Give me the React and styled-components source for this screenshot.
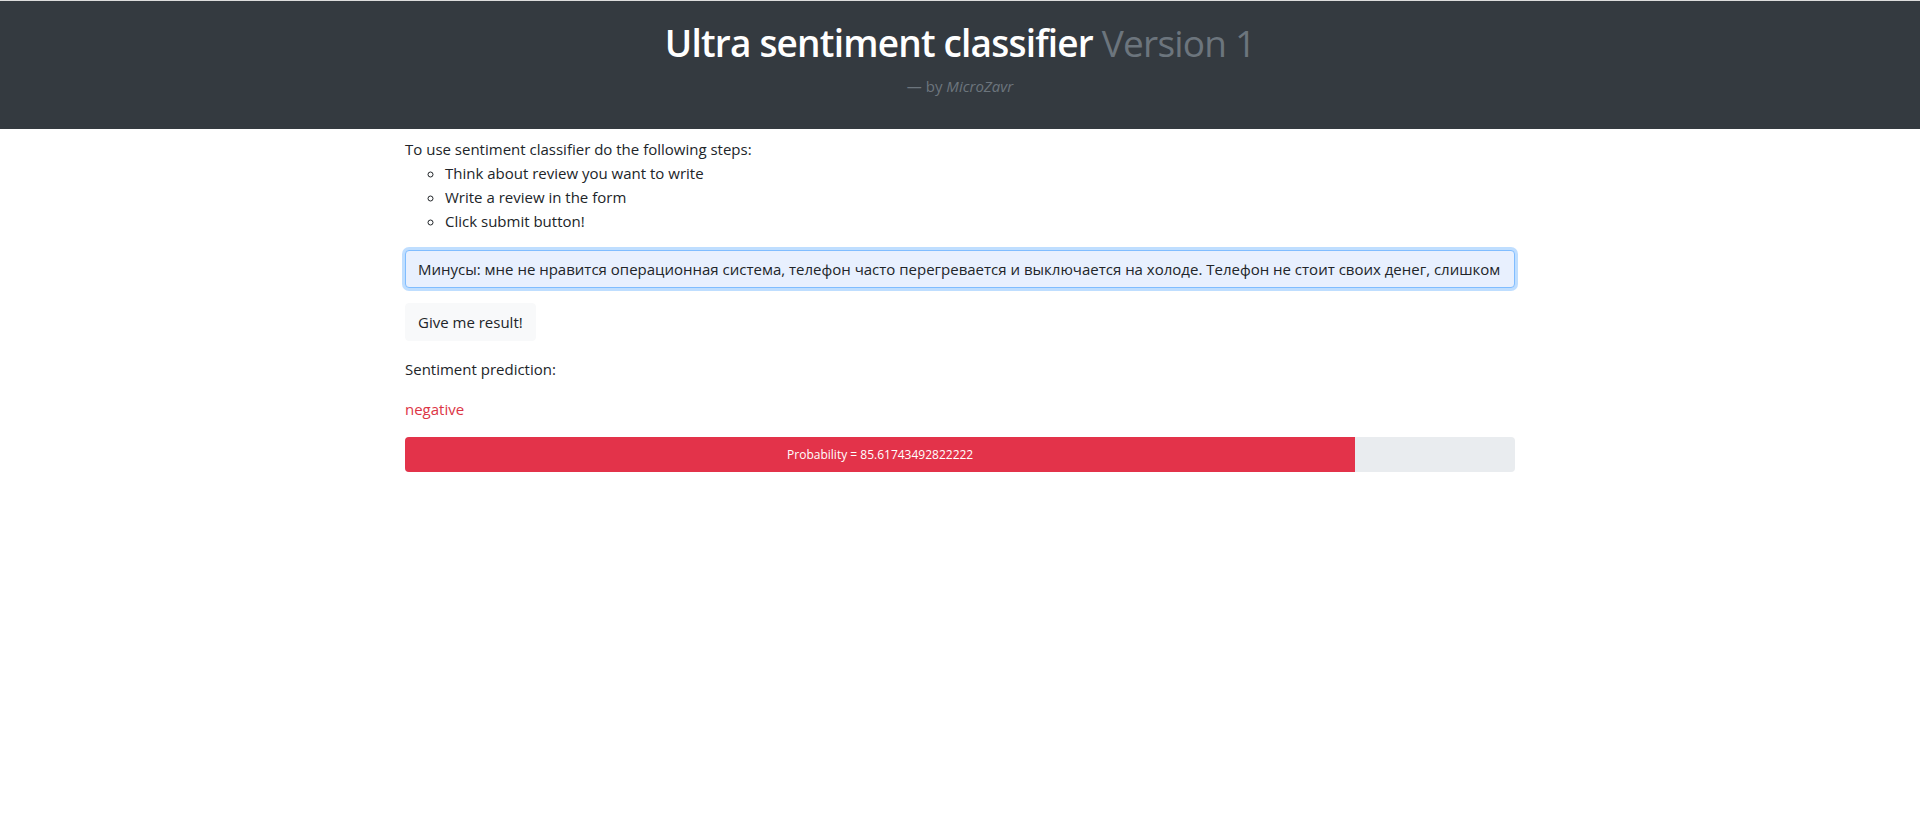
import React from 'react';
import styled, { createGlobalStyle } from 'styled-components';

const GlobalStyle = createGlobalStyle`
    html, body {
        margin: 0;
        padding: 0;
        background: #fff;
    }
    body {
        font-family: "Open Sans", "Noto Sans", "Liberation Sans", sans-serif;
        font-size: 15px;
        line-height: 24px;
        color: #212529;
        border-top: 1px solid #dcdcdc;
    }
    * {
        box-sizing: border-box;
    }
`

const review = 'Минусы: мне не нравится операционная система, телефон часто перегревается и выключается на холоде. Телефон не стоит своих денег, слишком дорогой для такого качества.';
const probability = 85.61743492822222;

export default function App() {
    return (
        <>
            <GlobalStyle />
            <Header>
                <Title>
                    Ultra sentiment classifier <Muted>Version 1</Muted>
                </Title>
                <Byline>
                    — by <cite>MicroZavr</cite>
                </Byline>
            </Header>
            <Container>
                <Intro>To use sentiment classifier do the following steps:</Intro>
                <Steps>
                    <li>Think about review you want to write</li>
                    <li>Write a review in the form</li>
                    <li>Click submit button!</li>
                </Steps>
                <Form onSubmit={(e) => e.preventDefault()}>
                    <ReviewInput defaultValue={review} spellCheck="false" />
                    <SubmitButton type="submit">Give me result!</SubmitButton>
                </Form>
                <Text>Sentiment prediction:</Text>
                <Text color="#dc3545">negative</Text>
                <Progress>
                    <Bar style={{ width: `${probability}%` }}>
                        Probability = {probability}
                    </Bar>
                </Progress>
            </Container>
        </>
    )
}

const Header = styled.header`
    background-color: #343a40;
    padding: 18px 0 31px;
    text-align: center;
`

const Title = styled.h1`
    margin: 0 0 7px;
    font-size: 37px;
    line-height: 48px;
    font-weight: 600;
    letter-spacing: -0.8px;
    color: #fff;
`

const Muted = styled.span`
    font-weight: 400;
    color: #6c757d;
`

const Byline = styled.div`
    font-size: 15px;
    line-height: 24px;
    color: #6c757d;

    cite {
        font-style: italic;
    }
`

const Container = styled.main`
    width: 1110px;
    margin: 0 auto;
    padding-top: 8px;
`

const Intro = styled.div``

const Steps = styled.ul`
    margin: 0 0 17px;
    padding-left: 40px;
    list-style: circle;
`

const Form = styled.form`
    display: flex;
    flex-direction: column;
    align-items: flex-start;
    gap: 15px;
    margin-bottom: 16px;
`

const ReviewInput = styled.input`
    width: 100%;
    height: 38px;
    padding: 6px 12px;
    font-family: inherit;
    font-size: 15px;
    line-height: 24px;
    color: #212529;
    background-color: #e8f0fe;
    border: 1px solid #80bdff;
    border-radius: 4px;
    box-shadow: 0 0 0 3px rgba(0, 123, 255, 0.25);
    outline: none;
`

const SubmitButton = styled.button`
    height: 38px;
    padding: 6px 12px;
    font-family: inherit;
    font-size: 15px;
    line-height: 24px;
    color: #212529;
    background-color: #f8f9fa;
    border: 1px solid #f8f9fa;
    border-radius: 4px;
    cursor: pointer;
`

const Text = styled.p`
    margin: 0 0 16px;
    color: ${({ color }) => color || '#212529'};
`

const Progress = styled.div`
    display: flex;
    height: 35px;
    margin-top: 16px;
    background-color: #e9ecef;
    border-radius: 4px;
    overflow: hidden;
`

const Bar = styled.div`
    display: flex;
    align-items: center;
    justify-content: center;
    background-color: #e3334a;
    color: #fff;
    font-size: 12px;
    white-space: nowrap;
`
